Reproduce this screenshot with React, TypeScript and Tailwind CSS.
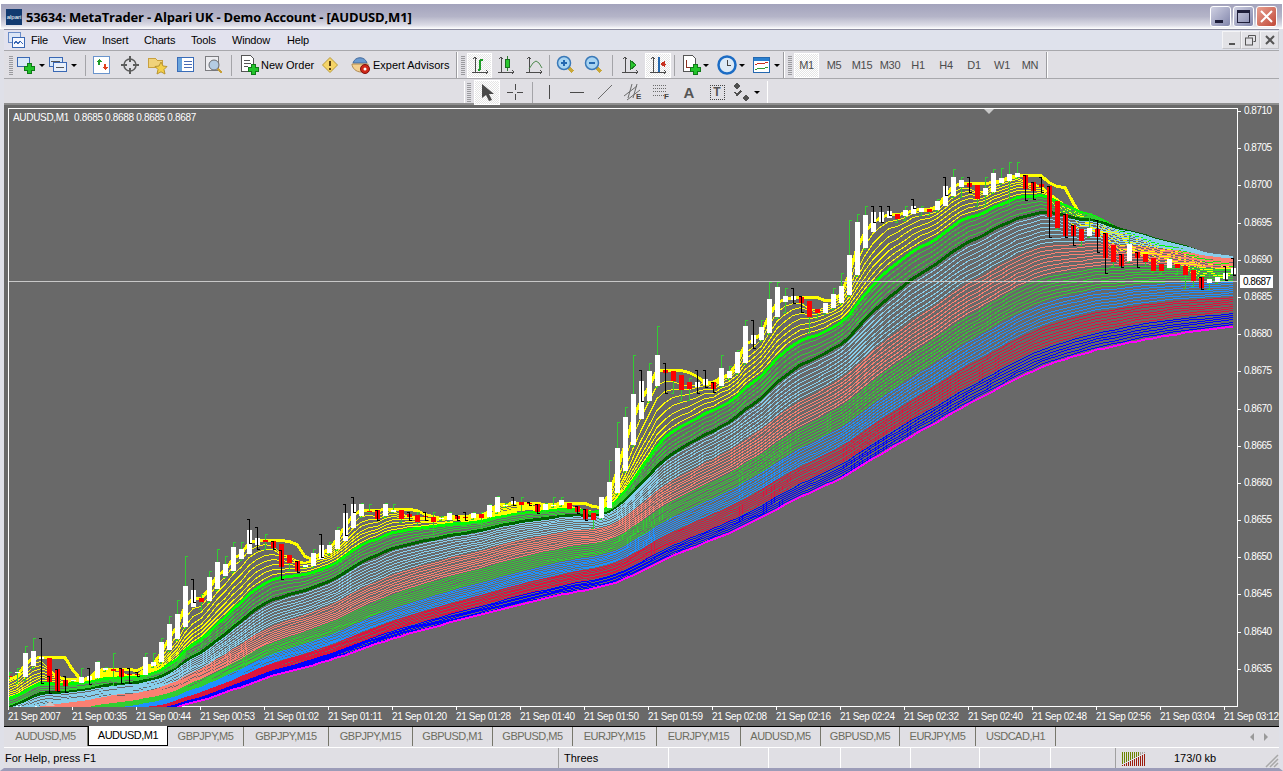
import type { ReactNode } from 'react'

// bars: body top, body bottom, wick top, wick bottom, kind
// kind 0 = down/black wick, 1 = up/green wick, 2 = down/green wick, 3 = up/black wick
const bars: number[][] = [
  [676,677,672,678,2],[672,673,668,683,1],[653,677,646,680,1],[651,666,638,668,1],[657,659,638,683,3],[658,682,676,693,0],[669,691,669,691,0],[680,686,676,692,0],
  [680,681,680,681,1],[677,683,668,684,1],[676,680,668,684,3],[662,678,661,679,1],[668,670,667,671,1],[669,671,653,685,2],[669,677,668,683,0],[674,675,668,683,0],
  [674,675,672,676,0],[657,675,653,676,1],[662,666,653,667,1],[642,662,638,663,1],[624,650,616,651,1],[614,639,600,640,1],[586,627,556,628,1],[590,607,579,602,3],
  [598,602,594,609,2],[577,601,571,602,1],[562,589,549,590,1],[564,576,556,577,1],[547,571,542,572,1],[549,559,542,560,1],[530,554,519,543,3],[538,545,527,549,3],
  [540,542,534,549,2],[541,548,541,549,0],[544,567,550,579,0],[555,563,555,570,2],[561,571,561,572,0],[565,567,565,567,1],[553,566,549,567,1],[545,559,534,557,3],
  [545,553,542,554,1],[530,549,527,550,1],[513,541,504,535,3],[504,528,497,512,3],[504,516,503,517,1],[511,512,504,512,2],[510,519,510,520,0],[504,516,503,517,1],
  [510,512,504,512,1],[510,519,510,522,2],[514,517,512,520,0],[515,522,512,525,2],[516,517,512,520,0],[517,522,512,534,2],[518,519,516,520,1],[513,520,512,521,1],
  [516,519,515,520,0],[517,518,512,520,0],[513,518,512,519,1],[514,518,512,528,2],[505,517,504,518,1],[497,512,496,513,1],[505,506,503,507,1],[501,504,497,505,3],
  [502,505,497,512,2],[503,504,502,505,0],[504,512,504,513,0],[504,510,503,511,1],[505,506,497,507,1],[500,505,497,506,1],[503,509,503,510,2],[506,512,506,513,0],
  [509,519,509,520,0],[513,520,513,528,2],[497,518,497,519,1],[482,508,460,509,1],[448,493,422,494,1],[417,471,407,472,1],[394,445,355,446,1],[381,419,370,401,3],
  [371,401,363,402,1],[355,386,326,387,1],[370,373,363,393,0],[371,381,371,393,2],[375,390,375,400,2],[382,389,378,400,2],[382,387,370,393,3],[379,385,370,387,3],
  [382,389,382,392,0],[368,386,355,387,1],[371,378,366,379,1],[352,373,350,374,1],[326,363,320,364,1],[335,344,320,348,3],[327,340,320,341,1],[299,333,282,334,1],
  [287,317,282,318,1],[296,302,288,312,1],[296,300,288,303,3],[297,303,296,312,0],[301,317,301,333,2],[309,313,309,318,2],[303,313,303,314,1],[294,308,288,309,1],
  [286,303,273,304,1],[255,295,220,296,1],[222,275,214,276,1],[215,248,206,249,1],[212,232,206,222,3],[212,222,206,222,3],[211,218,206,215,3],[214,219,214,222,2],
  [210,216,206,220,1],[206,214,199,208,3],[208,212,206,215,1],[209,212,209,215,2],[201,210,199,211,1],[186,206,177,195,3],[177,196,169,197,1],[180,187,177,197,1],
  [183,187,177,192,0],[185,199,185,206,2],[188,195,177,206,1],[173,192,169,193,1],[178,183,168,184,1],[174,181,162,205,1],[173,177,162,178,1],[175,189,175,200,0],
  [182,191,182,199,0],[184,187,177,192,0],[186,217,186,237,0],[201,228,201,229,2],[214,236,214,237,0],[225,236,225,245,0],[229,241,229,245,2],[228,236,213,237,1],
  [229,237,220,252,0],[233,258,233,273,0],[245,262,245,266,2],[254,266,254,267,0],[244,261,235,262,1],[252,258,252,267,0],[254,262,254,266,2],[258,271,258,272,2],
  [264,271,264,273,2],[259,268,258,269,1],[264,268,264,274,2],[266,275,266,288,2],[270,281,270,286,2],[277,288,277,289,0],[279,283,272,289,1],[277,282,273,283,1],
  [273,279,266,280,3],[268,274,258,275,3],
]

const barX = (k: number) => 9 + 8 * k
const closes = bars.map((b) => (b[4] === 1 || b[4] === 3 ? b[0] : b[1]))

// the moving averages: period grows by a fixed step per line
const lineColor = (i: number) => {
  if (i <= 7) return '#ffff00'
  if (i === 8) return '#00ff00'
  if (i <= 12) return '#32cd32'
  if (i === 13) return '#006400'
  if (i <= 21) return '#87ceeb'
  if (i <= 29) return '#fa8072'
  if (i <= 36) return '#32cd32'
  if (i <= 43) return '#1e90ff'
  if (i <= 50) return '#dc143c'
  if (i <= 56) return '#0000ff'
  return '#ff00ff'
}

const lineWidth = (i: number) => (i === 8 || i === 13 ? 3 : i === 57 ? 2 : 1)

const ema = (period: number) => {
  const a = 2 / (period + 1)
  let v = 676 + 56 * (1 - Math.exp(-period / 28))
  return closes.map((c) => {
    v += (c - v) * a
    return v
  })
}

const pointsOf = (ys: number[]) => ys.map((y, k) => `${barX(k)},${Math.round(y) + 0.5}`).join(' ')

// thick yellow: fast average that holds its high for a few bars
const fast = ema(3)
const topLine = fast.map((_, k) => Math.min(...fast.slice(Math.max(0, k - 3), k + 1)))

const lines = Array.from({ length: 57 }, (_, n) => {
  const i = n + 1
  return { i, ys: ema(3 + 1.7 * i) }
})

const timeLabels = [
  '21 Sep 2007', '21 Sep 00:35', '21 Sep 00:44', '21 Sep 00:53', '21 Sep 01:02', '21 Sep 01:11', '21 Sep 01:20',
  '21 Sep 01:28', '21 Sep 01:40', '21 Sep 01:50', '21 Sep 01:59', '21 Sep 02:08', '21 Sep 02:16', '21 Sep 02:24',
  '21 Sep 02:32', '21 Sep 02:40', '21 Sep 02:48', '21 Sep 02:56', '21 Sep 03:04', '21 Sep 03:12',
]

const prices = ['0.8710','0.8705','0.8700','0.8695','0.8690','0.8685','0.8680','0.8675','0.8670','0.8665','0.8660','0.8655','0.8650','0.8645','0.8640','0.8635']

const tabs = [
  { label: 'AUDUSD,M5', w: 'w-[84px]' },
  { label: 'AUDUSD,M1', w: 'w-[80px]', active: true },
  { label: 'GBPJPY,M5', w: 'w-[76px]' },
  { label: 'GBPJPY,M15', w: 'w-[85px]' },
  { label: 'GBPJPY,M15', w: 'w-[84px]' },
  { label: 'GBPUSD,M1', w: 'w-[80px]' },
  { label: 'GBPUSD,M5', w: 'w-[80px]' },
  { label: 'EURJPY,M15', w: 'w-[84px]' },
  { label: 'EURJPY,M15', w: 'w-[84px]' },
  { label: 'AUDUSD,M5', w: 'w-[80px]' },
  { label: 'GBPUSD,M5', w: 'w-[79px]' },
  { label: 'EURJPY,M5', w: 'w-[76px]' },
  { label: 'USDCAD,H1', w: 'w-[80px]' },
]

const Ico = ({ children, w = 20, h = 20 }: { children: ReactNode; w?: number; h?: number }) => (
  <svg width={w} height={h} viewBox={`0 0 ${w} ${h}`} fill="none" shapeRendering="crispEdges" className="shrink-0">
    {children}
  </svg>
)

const Plus = ({ x, y }: { x: number; y: number }) => (
  <path d={`M${x + 3} ${y}h4v3h3v4h-3v3h-4v-3h-3v-4h3z`} fill="#22c32a" stroke="#0f7a18" />
)

const Caret = () => <span className="ml-[2px] w-0 h-0 border-x-[3px] border-x-transparent border-t-[3px] border-t-black" />

const Axes = ({ children }: { children?: ReactNode }) => (
  <Ico>
    <path d="M5 2v15M2 17h16M3 4l2-2 2 2M16 15l2 2-2 2" stroke="#4b4b4b" />
    {children}
  </Ico>
)

const Btn = ({ children, w = 'w-[28px]', pressed }: { children: ReactNode; w?: string; pressed?: boolean }) => (
  <div
    className={`${w} h-[25px] shrink-0 flex items-center justify-center ${
      pressed ? 'border border-white bg-[repeating-conic-gradient(#ffffff_0_25%,#e4e4e4_0_50%)] bg-[length:2px_2px]' : ''
    }`}
  >
    {children}
  </div>
)

const Sep = () => <div className="w-px h-[21px] mx-[1px] shrink-0 bg-[#a4a4a8]" />

const Grip = () => (
  <div className="w-[4px] h-[19px] mx-[2px] shrink-0 bg-[repeating-linear-gradient(180deg,#9a9a9e_0_1px,transparent_1px_2px)]" />
)

const GroupEnd = () => <div className="w-[2px] h-full shrink-0 border-l border-[#9c9ca0] bg-white" />

const Gap = ({ w }: { w: string }) => <div className={`${w} shrink-0`} />

const TF = ({ label, pressed }: { label: string; pressed?: boolean }) => (
  <Btn pressed={pressed} w={pressed ? 'w-[25px]' : 'w-[28px]'}>
    <span className="text-[11px] text-[#4c4c4c] leading-none tracking-[-0.3px]">{label}</span>
  </Btn>
)

const Magnifier = ({ minus }: { minus?: boolean }) => (
  <Ico>
    <path d="M12 12l5 5" stroke="#c9a83a" strokeWidth="3" />
    <circle cx="8" cy="8" r="6.5" fill="#a8d4f2" stroke="#3a79b8" strokeWidth="1.5" shapeRendering="auto" />
    <path d={minus ? 'M5 8h6' : 'M5 8h6M8 5v6'} stroke="#2468b0" strokeWidth="2" />
  </Ico>
)

const WinBtn = ({ kind }: { kind: 'min' | 'max' | 'close' }) => (
  <div
    className={`w-[21px] h-[21px] rounded-[3px] border border-white flex items-center justify-center ${
      kind === 'close'
        ? 'bg-[linear-gradient(135deg,#e8a090,#c04838)]'
        : 'bg-[linear-gradient(135deg,#cfd0e2,#8286ac)]'
    }`}
  >
    {kind === 'min' && <div className="w-[8px] h-[3px] bg-[#1e1e3a] mt-[9px] -ml-[3px]" />}
    {kind === 'max' && <div className="w-[13px] h-[13px] border border-t-[3px] border-[#1e1e3a]" />}
    {kind === 'close' && (
      <svg width="13" height="13" viewBox="0 0 13 13">
        <path d="M1 1l11 11M12 1L1 12" stroke="#fff" strokeWidth="2" />
      </svg>
    )}
  </div>
)

const MdiBtn = ({ children }: { children: ReactNode }) => (
  <div className="w-[19px] h-[18px] border border-[#f4f4f6] border-r-[#c4c4c8] border-b-[#c4c4c8] bg-[#e2e2e6] flex items-center justify-center">
    {children}
  </div>
)

const Chart = () => (
  <svg width={1228} height={598} viewBox="9 109 1228 598" className="block">
    <polyline points={pointsOf(topLine)} fill="none" stroke="#ffff00" strokeWidth={3} shapeRendering="crispEdges" />
    {lines.map((l) => (
      <polyline
        key={l.i}
        points={pointsOf(l.ys)}
        fill="none"
        stroke={lineColor(l.i)}
        strokeWidth={lineWidth(l.i)}
        shapeRendering="crispEdges"
      />
    ))}
    <line x1={9} x2={1237} y1={281.5} y2={281.5} stroke="#c8c8c8" shapeRendering="crispEdges" />
    {bars.map((b, k) => {
      const x = barX(k)
      const [t, h, wt, wb, kind] = b
      const up = kind === 1 || kind === 3
      const black = kind === 0 || kind === 3
      const wick = (
        <g>
          <rect x={x} y={wt} width={1} height={wb - wt} fill={black ? '#000000' : '#32cd32'} />
          <rect x={black ? x - 2 : x} y={wt} width={3} height={1} fill={black ? '#000000' : '#32cd32'} />
          <rect x={black ? x : x - 2} y={wb} width={3} height={1} fill={black ? '#000000' : '#32cd32'} />
        </g>
      )
      return (
        <g key={k} shapeRendering="crispEdges">
          {!black && wick}
          <rect x={x - 2} y={t} width={5} height={h - t} fill={up ? '#ffffff' : '#ff0000'} />
          {black && wick}
        </g>
      )
    })}
  </svg>
)

export default function App() {
  return (
    <div className="w-[1283px] h-[771px] overflow-hidden bg-white font-['Liberation_Sans',sans-serif] text-[11px] text-black flex flex-col pt-[4px]">
      {/* Title bar */}
      <div className="h-[25px] mx-[1px] px-[5px] flex items-center bg-[linear-gradient(180deg,#a3a3bc_0%,#b4b4c8_50%,#dcdce6_85%,#ffffff_100%)]">
        <div className="w-[16px] h-[16px] bg-[#123a70] flex items-center justify-center text-[6px] text-white leading-none">
          alpari
        </div>
        <div className="ml-[4px] mt-[2px] text-[13px] font-bold font-['Open_Sans',sans-serif] tracking-[-0.18px] leading-none">
          53634: MetaTrader - Alpari UK - Demo Account - [AUDUSD,M1]
        </div>
        <div className="ml-auto flex gap-[2px]">
          <WinBtn kind="min" />
          <WinBtn kind="max" />
          <WinBtn kind="close" />
        </div>
      </div>

      {/* Everything inside the window frame */}
      <div className="flex-1 min-h-0 flex flex-col border-x-[4px] border-x-[#dfe0e8] border-b-[3px] border-b-[#9c9cb8]">
        {/* Menu */}
        <div className="h-[22px] shrink-0 border-t border-b border-t-[#8c8ca0] border-b-[#a8a8ac] bg-[#dfe2ec] flex items-center">
          <div className="flex items-center w-[316px] h-full bg-[#e2e2ee] pl-[4px]">
            <Ico w={17} h={17}>
              <rect x="0.5" y="0.5" width="12" height="10" fill="#dce6f6" stroke="#6a8cc8" />
              <rect x="4.5" y="5.5" width="12" height="10" fill="#f6f8ff" stroke="#3a68b4" />
              <path d="M6 12l2-3 2 3 2-3 3 3" stroke="#3a68b4" />
            </Ico>
            <div className="flex items-center ml-[6px] tracking-[-0.2px]">
              <span className="w-[32px]">File</span>
              <span className="w-[39px]">View</span>
              <span className="w-[42px]">Insert</span>
              <span className="w-[47px]">Charts</span>
              <span className="w-[41px]">Tools</span>
              <span className="w-[55px]">Window</span>
              <span>Help</span>
            </div>
          </div>
          <div className="ml-auto flex">
            <MdiBtn>
              <div className="w-[6px] h-[2px] bg-[#555] mt-[7px]" />
            </MdiBtn>
            <MdiBtn>
              <svg width="11" height="11" viewBox="0 0 11 11" fill="none" stroke="#555">
                <path d="M3.5 2.5v-2h7v6h-2" />
                <rect x="0.5" y="3" width="7" height="7" />
              </svg>
            </MdiBtn>
            <MdiBtn>
              <svg width="10" height="10" viewBox="0 0 10 10">
                <path d="M1 1l8 8M9 1L1 9" stroke="#555" strokeWidth="2" />
              </svg>
            </MdiBtn>
          </div>
        </div>

        {/* Standard toolbar */}
        <div className="h-[28px] shrink-0 bg-[#e0dfe4] flex items-center pt-[1px] border-b border-[#a8a8ac]">
          <Gap w="w-[3px]" />
          <Grip />
          <Btn w="w-[32px]">
            <Ico>
              <rect x="0.5" y="2.5" width="12" height="9" fill="#d8e8f8" stroke="#3a68b4" />
              <Plus x={7} y={8} />
            </Ico>
            <Caret />
          </Btn>
          <Btn w="w-[31px]">
            <Ico>
              <rect x="0.5" y="2.5" width="13" height="9" fill="#d8e8f8" stroke="#3a68b4" />
              <rect x="4.5" y="7.5" width="13" height="9" fill="#e8f0fa" stroke="#3a68b4" />
              <path d="M2 6h9M7 12h8" stroke="#555" />
            </Ico>
            <Caret />
          </Btn>
          <Gap w="w-[6px]" />
          <Sep />
          <Gap w="w-[1px]" />
          <Btn>
            <Ico>
              <rect x="1.5" y="1.5" width="16" height="17" fill="#fff" stroke="#6a94cc" />
              <path d="M7 4l3 3H8v3H6V7H4z" fill="#1f9c28" />
              <path d="M13 15l-3-3h2V9h2v3h2z" fill="#e0401c" />
            </Ico>
          </Btn>
          <Btn>
            <Ico>
              <circle cx="10" cy="10" r="6" stroke="#5c5c5c" strokeWidth="1.5" shapeRendering="auto" />
              <path d="M10 1v6M10 13v6M1 10h6M13 10h6" stroke="#5c5c5c" strokeWidth="1.5" />
            </Ico>
          </Btn>
          <Btn>
            <Ico>
              <path d="M0 3h7l2 2h5v7H0z" fill="#f0d27a" stroke="#c8a040" />
              <path d="M13 7l2 4 4 .5-3 3 1 4.5-4-2.2L9 19l1-4.5-3-3 4-.5z" fill="#f4d04a" stroke="#b89430" shapeRendering="auto" />
            </Ico>
          </Btn>
          <Btn>
            <Ico>
              <rect x="1.5" y="2.5" width="16" height="14" fill="#fff" stroke="#3a6cb8" />
              <rect x="2" y="3" width="4" height="13" fill="#6aa4dc" />
              <path d="M8 6h8M8 9h8M8 12h8" stroke="#4a6cb4" />
            </Ico>
          </Btn>
          <Btn>
            <Ico>
              <rect x="1.5" y="1.5" width="13" height="14" fill="#ececf0" stroke="#7c7c80" />
              <circle cx="10" cy="10" r="5" fill="#b4cce4" stroke="#6c6c70" shapeRendering="auto" />
              <path d="M14 14l4 4" stroke="#c8a038" strokeWidth="2" />
            </Ico>
          </Btn>
          <Gap w="w-[2px]" />
          <Sep />
          <Gap w="w-[6px]" />
          <Ico>
            <path d="M2.5 0.5h9l3 3v13h-12z" fill="#fff" stroke="#555" />
            <path d="M5 5h6M5 8h7M5 11h4" stroke="#555" />
            <Plus x={9} y={9} />
          </Ico>
          <span className="ml-[2px] w-[61px] shrink-0 whitespace-nowrap">New Order</span>
          <Ico w={16} h={16}>
            <path d="M8 0.5l7.5 7.5-7.5 7.5L0.5 8z" fill="#f4d468" stroke="#b89a38" shapeRendering="auto" />
            <path d="M8 4v5M8 11v2" stroke="#5a4010" strokeWidth="2" />
          </Ico>
          <Gap w="w-[13px]" />
          <Ico>
            <path d="M2 8c2-7 12-7 14 0z" fill="#6a9ad0" stroke="#446a9c" shapeRendering="auto" />
            <path d="M1 9h16c1 4-2 8-7 8s-9-4-9-8z" fill="#f4d090" stroke="#b08a50" shapeRendering="auto" />
            <circle cx="14" cy="14" r="4.5" fill="#d02818" stroke="#801010" shapeRendering="auto" />
            <circle cx="14" cy="14" r="1.5" fill="#fff" shapeRendering="auto" />
          </Ico>
          <span className="ml-[2px] w-[83px] shrink-0 whitespace-nowrap">Expert Advisors</span>
          <GroupEnd />
          <Gap w="w-[1px]" />
          <Grip />
          <Btn w="w-[25px]" pressed>
            <Axes>
              <path d="M10 15V5M10 5h3M10 15H8" stroke="#1f9c28" strokeWidth="1.5" />
            </Axes>
          </Btn>
          <Btn>
            <Axes>
              <path d="M11 1v15" stroke="#2f7c30" />
              <rect x="9" y="4" width="4" height="8" fill="#29c72e" stroke="#1a6e20" />
            </Axes>
          </Btn>
          <Btn>
            <Axes>
              <path d="M5 14l4-6 3-2 3 2 3 5" stroke="#4f8a4f" shapeRendering="auto" />
            </Axes>
          </Btn>
          <Sep />
          <Gap w="w-[1px]" />
          <Btn>
            <Magnifier />
          </Btn>
          <Btn>
            <Magnifier minus />
          </Btn>
          <Gap w="w-[3px]" />
          <Sep />
          <Gap w="w-[2px]" />
          <Btn>
            <Axes>
              <path d="M10 5l6 5-6 5z" fill="#29c72e" stroke="#1a7c20" />
            </Axes>
          </Btn>
          <Gap w="w-[1px]" />
          <Btn w="w-[26px]" pressed>
            <Axes>
              <path d="M11 2v15" stroke="#2468b0" strokeWidth="1.5" />
              <path d="M18 9h-4M13 9l3-2v4z" stroke="#c83020" fill="#c83020" />
            </Axes>
          </Btn>
          <Gap w="w-[2px]" />
          <Sep />
          <Gap w="w-[4px]" />
          <Btn w="w-[30px]">
            <Ico>
              <path d="M2.5 0.5h9l3 3v13h-12z" fill="#fff" stroke="#555" />
              <path d="M5 5v7h5" stroke="#8c3020" />
              <Plus x={9} y={9} />
            </Ico>
            <Caret />
          </Btn>
          <Gap w="w-[6px]" />
          <Btn w="w-[30px]">
            <Ico>
              <circle cx="10" cy="10" r="8.5" fill="#dceaf6" stroke="#1c6cc4" strokeWidth="2.5" shapeRendering="auto" />
              <path d="M10 5v5h4" stroke="#444" />
            </Ico>
            <Caret />
          </Btn>
          <Gap w="w-[5px]" />
          <Btn w="w-[30px]">
            <Ico>
              <rect x="1.5" y="2.5" width="16" height="15" fill="#fff" stroke="#2468b0" />
              <rect x="2" y="3" width="15" height="3" fill="#2a80d0" />
              <path d="M3 10l4-2 3 1 6-2" stroke="#c83020" />
              <path d="M3 15l4-2 3 1 6-2" stroke="#2f9c30" />
            </Ico>
            <Caret />
          </Btn>
          <Gap w="w-[2px]" />
          <GroupEnd />
          <Gap w="w-[1px]" />
          <Grip />
          <TF label="M1" pressed />
          <Gap w="w-[1px]" />
          <TF label="M5" />
          <TF label="M15" />
          <TF label="M30" />
          <TF label="H1" />
          <TF label="H4" />
          <TF label="D1" />
          <TF label="W1" />
          <TF label="MN" />
          <Gap w="w-[2px]" />
          <GroupEnd />
        </div>

        {/* Drawing toolbar */}
        <div className="h-[26px] shrink-0 bg-[#e0dfe4] flex items-center pl-[460px] pt-[2px] border-b-2 border-[#8e8e8e]">
          <div className="w-[1px] h-full shrink-0 bg-white" />
          <Grip />
          <Gap w="w-[1px]" />
          <Btn w="w-[26px]" pressed>
            <svg width="14" height="18" viewBox="0 0 14 18">
              <path d="M2 1v14l4-3 3 6 3-1-3-6h5z" fill="#4a4a4a" />
            </svg>
          </Btn>
          <Gap w="w-[1px]" />
          <Btn>
            <Ico>
              <path d="M10 2v6M10 12v6M2 10h6M12 10h6" stroke="#4a4a4a" />
            </Ico>
          </Btn>
          <Gap w="w-[2px]" />
          <Sep />
          <Gap w="w-[1px]" />
          <Btn>
            <Ico>
              <path d="M10 3v14" stroke="#4a4a4a" />
            </Ico>
          </Btn>
          <Btn>
            <Ico>
              <path d="M3 10h14" stroke="#4a4a4a" />
            </Ico>
          </Btn>
          <Btn>
            <Ico>
              <path d="M3 17L17 3" stroke="#6c6c6c" shapeRendering="auto" />
            </Ico>
          </Btn>
          <Btn>
            <Ico>
              <path d="M1 14L14 4M4 18L17 8M5 16l4-14M10 16l4-14" stroke="#6c6c6c" shapeRendering="auto" />
              <text x="13" y="17" fontSize="8" fontWeight="700" fill="#444">E</text>
            </Ico>
          </Btn>
          <Btn>
            <Ico>
              <path d="M2 3h14M2 6h14M2 9h14M2 13h14" stroke="#6c6c6c" strokeDasharray="1 1" />
              <text x="13" y="17" fontSize="8" fontWeight="700" fill="#444">F</text>
            </Ico>
          </Btn>
          <Btn>
            <span className="text-[15px] font-bold text-[#555] leading-none">A</span>
          </Btn>
          <Btn>
            <div className="w-[15px] h-[15px] border border-dotted border-[#444] flex items-center justify-center text-[12px] font-bold text-[#555] leading-none">
              T
            </div>
          </Btn>
          <Btn w="w-[30px]">
            <Ico>
              <path d="M5 1l4 3-4 3-4-3zM14 13l4 3-4 3-4-3z" fill="#505050" />
              <path d="M3 10l2 3 4-4" stroke="#505050" strokeWidth="1.5" />
            </Ico>
            <Caret />
          </Btn>
          <Gap w="w-[6px]" />
          <div className="w-[1px] h-full shrink-0 bg-white" />
        </div>

        {/* Chart area */}
        <div className="flex-1 min-h-0 bg-[#696969] relative text-white overflow-hidden text-[10px] tracking-[-0.4px]">
          <div className="flex pt-[3px] pl-[4px]">
            <div className="border border-white w-[1230px] h-[599px] relative shrink-0">
              <Chart />
              <div className="absolute left-[4px] top-[2px] leading-[13px] whitespace-pre tracking-[-0.32px]">
                AUDUSD,M1{'  '}0.8685 0.8688 0.8685 0.8687
              </div>
              <div className="absolute left-[975px] top-0 w-0 h-0 border-x-[5px] border-x-transparent border-t-[5px] border-t-[#c8c8c8]" />
              <div className="absolute left-[36px] bottom-0 w-0 h-0 border-x-[5px] border-x-transparent border-b-[5px] border-b-[#c8c8c8]" />
            </div>
            <div className="flex flex-col -mt-[3px]">
              {prices.map((p) => (
                <div key={p} className="h-[37.2px] flex items-start leading-[12px] tracking-[-0.5px]">
                  <div className="w-[3px] h-px bg-white mt-[6px] mr-[3px]" />
                  {p}
                </div>
              ))}
            </div>
          </div>
          <div className="flex pl-[4px]">
            {timeLabels.map((t) => (
              <div key={t} className="w-[64px] shrink-0 whitespace-nowrap leading-[13px]">
                <div className="w-px h-[3px] bg-white" />
                {t}
              </div>
            ))}
          </div>
          <div className="absolute left-[1236px] top-[170px] w-[33px] h-[13px] bg-white text-black leading-[13px] pl-[3px] tracking-[-0.5px]">
            0.8687
          </div>
        </div>

        {/* Tabs */}
        <div className="h-[21px] shrink-0 bg-[#e0dfe4] flex border-t border-black text-[#6c6c60] text-[11px] tracking-[-0.5px]">
          {tabs.map((t, i) => (
            <div
              key={i}
              className={`${t.w} h-[19px] flex items-center justify-center border-r ${
                t.active
                  ? 'bg-white text-black border-x border-b border-black -mt-px h-[20px]'
                  : 'border-[#77776c]'
              }`}
            >
              {t.label}
            </div>
          ))}
          <div className="ml-auto flex items-center gap-[10px] pr-[11px]">
            <div className="w-0 h-0 border-y-[4px] border-y-transparent border-r-[4px] border-r-[#9a9a9a]" />
            <div className="w-0 h-0 border-y-[4px] border-y-transparent border-l-[4px] border-l-[#9a9a9a]" />
          </div>
        </div>

        {/* Status bar */}
        <div className="h-[21px] shrink-0 bg-[#e0dfe4] border-t border-white flex items-center relative">
          <div className="w-[554px] pl-[1px]">For Help, press F1</div>
          <div className="w-[110px] h-full border-l border-[#a0a0a0] pl-[5px] flex items-center">Threes</div>
          <div className="w-[100px] h-full border-l border-white" />
          <div className="w-[72px] h-full border-l border-white" />
          <div className="w-[70px] h-full border-l border-white" />
          <div className="w-[69px] h-full border-l border-white" />
          <div className="w-[71px] h-full border-l border-white" />
          <div className="w-[65px] h-full border-l border-white" />
          <div className="h-full border-l border-[#a0a0a0] pl-[6px] flex items-center">
            <svg width="24" height="15" viewBox="0 0 24 15" shapeRendering="crispEdges">
              {Array.from({ length: 12 }, (_, n) => (
                <g key={n}>
                  <rect x={n * 2} y={1} width={1} height={Math.max(1, 12 - n)} fill={n > 8 ? '#a8a8a0' : '#6c8400'} />
                  <rect x={n * 2} y={14 - n} width={1} height={n + 1} fill="#9c1c0c" />
                </g>
              ))}
            </svg>
            <span className="ml-[28px]">173/0 kb</span>
          </div>
          <svg width="14" height="14" viewBox="0 0 14 14" className="absolute right-0 bottom-0">
            <path d="M13 1L1 13M13 5L5 13M13 9L9 13" stroke="#a8a8a8" strokeWidth="1.5" />
          </svg>
        </div>
      </div>
    </div>
  )
}
